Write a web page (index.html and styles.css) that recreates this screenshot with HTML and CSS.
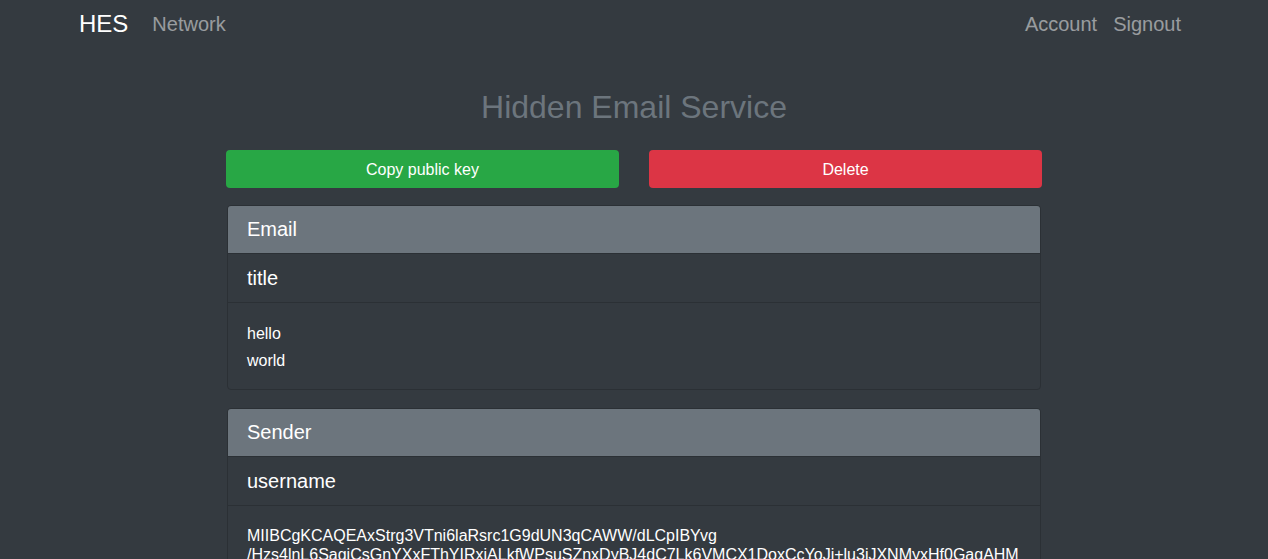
FILE: index.html
```html
<!DOCTYPE html>
<html lang="en">
<head>
<meta charset="utf-8">
<title>Hidden Email Service</title>
<link rel="stylesheet" href="styles.css">
</head>
<body>
<nav class="navbar">
  <div class="nav-left">
    <a class="brand" href="#">HES</a>
    <a class="nav-link" href="#">Network</a>
  </div>
  <div class="nav-right">
    <a class="nav-link" href="#">Account</a>
    <a class="nav-link" href="#">Signout</a>
  </div>
</nav>
<main class="main">
  <h2 class="page-title">Hidden Email Service</h2>
  <div class="actions">
    <button class="btn btn-green">Copy public key</button>
    <button class="btn btn-red">Delete</button>
  </div>
  <section class="card">
    <div class="card-header">Email</div>
    <div class="card-row">title</div>
    <div class="card-body body-text">
      <div>hello</div>
      <div>world</div>
    </div>
  </section>
  <section class="card">
    <div class="card-header">Sender</div>
    <div class="card-row">username</div>
    <div class="card-body key-text">
      <span class="key-line">MIIBCgKCAQEAxStrg3VTni6laRsrc1G9dUN3qCAWW/dLCpIBYvg</span>
      <span class="key-line">/Hzs4lnL6SagiCsGnYXxFThYIRxjALkfWPsuSZnxDyBJ4dC7Lk6VMCX1DoxCcYoJi+lu3iJXNMyxHf0GagAHM</span>
      <span class="key-line">QkBsVn2tWcFi8dRpY0KXo7TmLx9bZeQ4HwUaJ3GvNcS1fIyO6rEqD5hPgTlAu2Mk8zWjBn0CxVRdsYmIoLe</span>
    </div>
  </section>
</main>
</body>
</html>
```
FILE: styles.css
```css
html {
  overflow: hidden;
}
body {
  margin: 0;
  background: #343a40;
  color: #ffffff;
  font-family: "Liberation Sans", Arial, sans-serif;
  font-size: 16px;
}
a {
  text-decoration: none;
}
.navbar {
  height: 48px;
  max-width: 1110px;
  margin: 0 auto;
  padding: 0;
  display: flex;
  align-items: center;
  justify-content: space-between;
}
.nav-left,
.nav-right {
  display: flex;
  align-items: center;
}
.brand {
  color: #ffffff;
  font-size: 24px;
  line-height: 30px;
  margin-right: 16px;
}
.nav-link {
  padding: 0 8px;
  color: rgba(255, 255, 255, 0.5);
  font-size: 20px;
  line-height: 30px;
}
.main {
  width: 816px;
  margin: 0 auto;
  padding-top: 40px;
}
.page-title {
  margin: 0 0 24px;
  text-align: center;
  color: #6c757d;
  font-size: 32px;
  font-weight: normal;
  line-height: 38px;
}
.actions {
  display: grid;
  grid-template-columns: 1fr 1fr;
  gap: 30px;
  margin-bottom: 17px;
}
.btn {
  box-sizing: border-box;
  height: 38px;
  padding: 7px 12px 5px;
  border: 1px solid transparent;
  border-radius: 4px;
  color: #ffffff;
  font-family: "Liberation Sans", Arial, sans-serif;
  font-size: 16px;
  line-height: 24px;
}
.btn-green {
  background: #28a745;
}
.btn-red {
  background: #dc3545;
}
.card {
  margin: 0 1px 18px;
  border: 1px solid #2b3035;
  border-radius: 4px;
  background: #343a40;
  overflow: hidden;
}
.card-header {
  background: #6c757d;
  padding: 11px 19px;
  font-size: 20px;
  line-height: 25px;
  border-bottom: 1px solid #2b3035;
}
.card-row {
  padding: 12px 19px 11px;
  font-size: 20px;
  line-height: 25px;
  border-bottom: 1px solid #2b3035;
}
.card-body {
  padding: 17px 19px 15px;
}
.body-text {
  line-height: 27px;
}
.key-text {
  padding-top: 20px;
  line-height: 19px;
}
.key-line {
  display: block;
  white-space: nowrap;
}
```
